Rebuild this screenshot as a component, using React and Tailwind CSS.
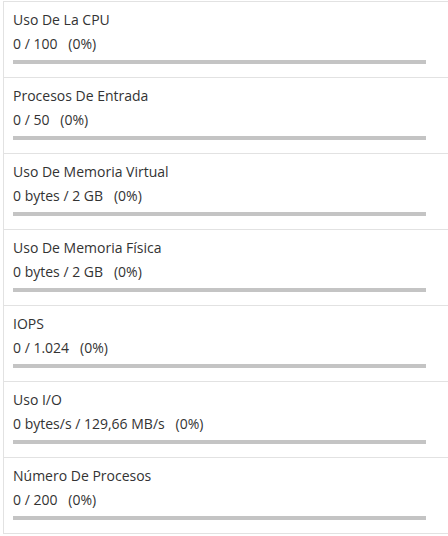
import React from "react";

const stats = [
  { label: "Uso De La CPU", value: "0 / 100", pct: "(0%)" },
  { label: "Procesos De Entrada", value: "0 / 50", pct: "(0%)" },
  { label: "Uso De Memoria Virtual", value: "0 bytes / 2 GB", pct: "(0%)" },
  { label: "Uso De Memoria Física", value: "0 bytes / 2 GB", pct: "(0%)" },
  { label: "IOPS", value: "0 / 1.024", pct: "(0%)" },
  { label: "Uso I/O", value: "0 bytes/s / 129,66 MB/s", pct: "(0%)" },
  { label: "Número De Procesos", value: "0 / 200", pct: "(0%)" },
];

const StatRow = ({ stat }) => {
  return (
    <div className="border-t border-[#e2e2e2] pl-[9px] pr-[22px] pt-[6px] pb-[13px]">
      <div className="text-[14px] leading-[24px] text-[#333]">{stat.label}</div>
      <div className="text-[14px] leading-[24px] text-[#333] whitespace-pre">
        {stat.value}
        {"   "}
        {stat.pct}
      </div>
      <div className="mt-[4px] h-[4px] bg-[#c4c4c4]"></div>
    </div>
  );
};

export default function App() {
  return (
    <div
      className="w-[448px] h-[536px] bg-white pl-[3px] pt-[1px]"
      style={{ fontFamily: '"Open Sans", sans-serif' }}
    >
      <div className="border-l border-b border-[#e2e2e2]">
        {stats.map((s, i) => (
          <StatRow key={i} stat={s} />
        ))}
      </div>
    </div>
  );
}
